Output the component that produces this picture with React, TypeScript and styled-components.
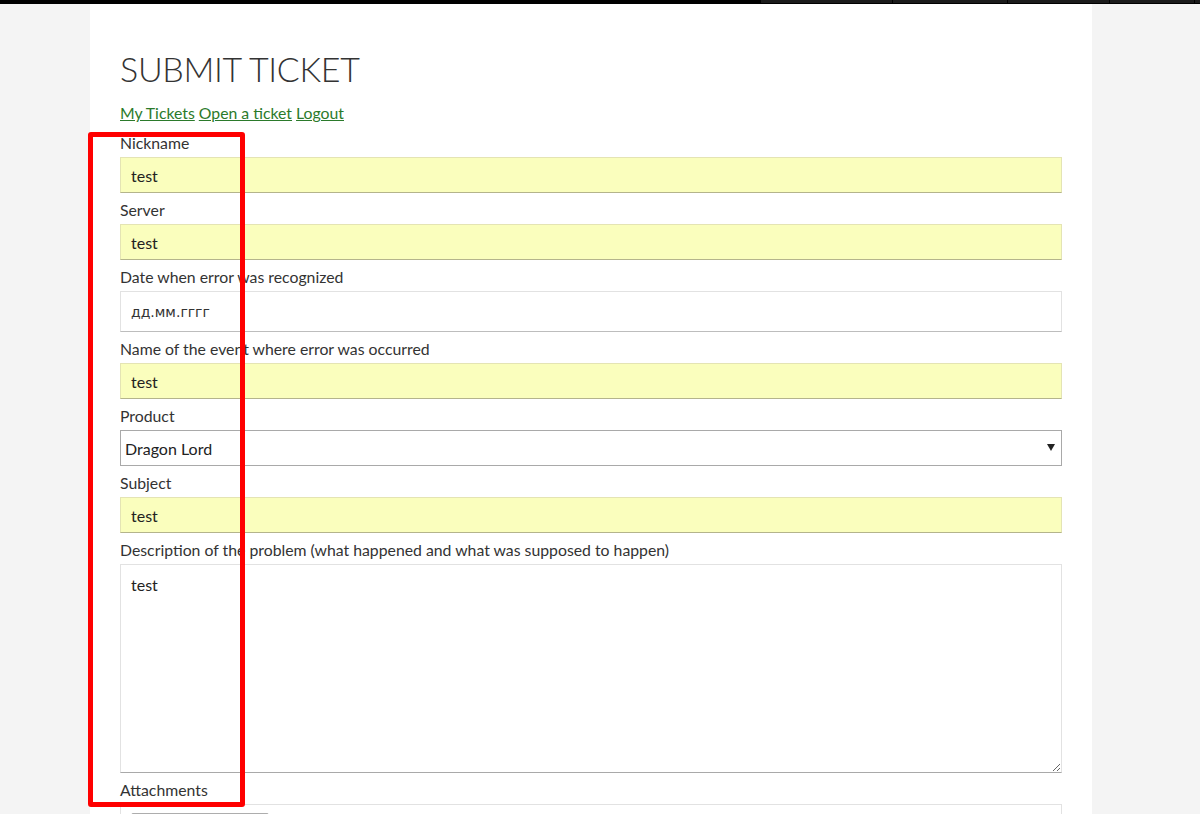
import React from "react";
import styled, { createGlobalStyle } from "styled-components";

const GlobalStyle = createGlobalStyle`
  html, body {
    margin: 0;
    padding: 0;
    background: #f4f4f4;
    font-family: Lato, "Open Sans", sans-serif;
    color: #333;
  }
  * { box-sizing: border-box; }
`;

const TopBar = styled.div`
  height: 4px;
  background: #000;
  display: flex;
  justify-content: flex-end;
  align-items: flex-start;
  gap: 1px;
`;

const BarSegment = styled.div<{ $w: number }>`
  width: ${(p) => p.$w}px;
  height: 3px;
  background: #1b1b1b;
`;

const Page = styled.div`
  width: 1002px;
  margin-left: 90px;
  background: #fff;
  padding: 44px 30px 0 30px;
  min-height: 810px;
`;

const Title = styled.h1`
  margin: 0;
  font-family: Lato, sans-serif;
  font-weight: 300;
  font-size: 34px;
  line-height: 40px;
  color: #333;
  letter-spacing: -0.3px;
  padding-top: 1px;
  height: 40px;
`;

const Nav = styled.div`
  margin-top: 14px;
  font-size: 15.8px;
  line-height: 22px;
  display: flex;
  gap: 4px;
`;

const NavLink = styled.a`
  color: #2b7a2b;
  text-decoration: underline;
  cursor: pointer;
`;

const Form = styled.form`
  margin-top: 9px;
  display: flex;
  flex-direction: column;
`;

const Label = styled.label`
  display: block;
  font-size: 15.8px;
  line-height: 20px;
  margin-bottom: 4px;
  color: #333;
`;

const Input = styled.input<{ $filled?: boolean; $h?: number }>`
  display: block;
  width: 100%;
  height: ${(p) => p.$h ?? 36}px;
  margin: 0 0 7px 0;
  padding: 0 10px;
  font-family: Lato, sans-serif;
  font-size: 16px;
  color: #222;
  outline: none;
  border: 1px solid ${(p) => (p.$filled ? "#e4e4b4" : "#e2e2e2")};
  border-bottom-color: ${(p) => (p.$filled ? "#b4b48c" : "#bdbdbd")};
  background: ${(p) => (p.$filled ? "#fafebd" : "#fff")};
`;

const DateInput = styled(Input)`
  font-family: "DejaVu Sans", "Noto Sans", sans-serif;
  font-size: 14px;
  color: #333;
`;

const SelectWrap = styled.div`
  position: relative;
  margin-bottom: 7px;
`;

const Select = styled.select`
  display: block;
  width: 100%;
  height: 36px;
  appearance: none;
  -webkit-appearance: none;
  border: 1px solid #a9a9a9;
  border-radius: 0;
  background: #fff;
  padding: 0 4px;
  font-family: Lato, sans-serif;
  font-size: 16px;
  color: #222;
  outline: none;
`;

const Arrow = styled.span`
  position: absolute;
  right: 7px;
  top: 14px;
  width: 0;
  height: 0;
  border-left: 4px solid transparent;
  border-right: 4px solid transparent;
  border-top: 7px solid #222;
  pointer-events: none;
`;

const TextArea = styled.textarea`
  display: block;
  width: 100%;
  height: 209px;
  margin: 0 0 7px 0;
  padding: 10px 10px;
  font-family: Lato, sans-serif;
  font-size: 16px;
  line-height: 20px;
  color: #222;
  border: 1px solid #e2e2e2;
  border-bottom-color: #a9a9a9;
  outline: none;
  resize: vertical;
`;

const FileBox = styled.div`
  height: 44px;
  border: 1px solid #e2e2e2;
  padding: 8px 10px;
`;

const FileButton = styled.div`
  width: 138px;
  height: 26px;
  border: 1px solid #adadad;
  border-radius: 2px;
  background: #eee;
`;

const Highlight = styled.div`
  position: absolute;
  left: 88px;
  top: 132px;
  width: 157px;
  height: 675px;
  border: 5px solid #ff0000;
  border-radius: 3px;
  pointer-events: none;
`;

const Root = styled.div`
  position: relative;
  height: 814px;
  overflow: hidden;
`;

const segments = [131, 114, 101, 84, 5];

export default function App() {
  return (
    <Root>
      <GlobalStyle />
      <TopBar>
        {segments.map((w, i) => (
          <BarSegment key={i} $w={w} />
        ))}
      </TopBar>
      <Page>
        <Title>SUBMIT TICKET</Title>
        <Nav>
          <NavLink>My Tickets</NavLink>
          <NavLink>Open a ticket</NavLink>
          <NavLink>Logout</NavLink>
        </Nav>
        <Form onSubmit={(e) => e.preventDefault()}>
          <Label>Nickname</Label>
          <Input $filled defaultValue="test" />
          <Label>Server</Label>
          <Input $filled defaultValue="test" />
          <Label>Date when error was recognized</Label>
          <DateInput $h={41} defaultValue="дд.мм.гггг" />
          <Label>Name of the event where error was occurred</Label>
          <Input $filled defaultValue="test" />
          <Label>Product</Label>
          <SelectWrap>
            <Select defaultValue="Dragon Lord">
              <option>Dragon Lord</option>
            </Select>
            <Arrow />
          </SelectWrap>
          <Label>Subject</Label>
          <Input $filled defaultValue="test" />
          <Label>
            Description of the problem (what happened and what was supposed to happen)
          </Label>
          <TextArea defaultValue="test" />
          <Label>Attachments</Label>
          <FileBox>
            <FileButton />
          </FileBox>
        </Form>
      </Page>
      <Highlight />
    </Root>
  );
}
